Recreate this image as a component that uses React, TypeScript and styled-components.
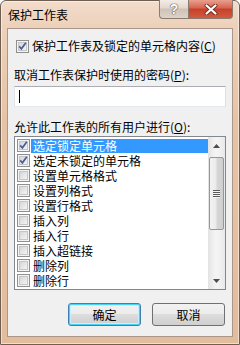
import React, { useState } from 'react';
import styled, { createGlobalStyle, css } from 'styled-components';

const GlobalStyle = createGlobalStyle`
  html, body {
    margin: 0;
    padding: 0;
    background: #ffffff;
  }
  body {
    font-family: "Noto Sans CJK SC", "Noto Sans", sans-serif;
    font-size: 12px;
    color: #000;
  }
`;

interface Permission {
  label: string;
  checked: boolean;
}

const initialItems: Permission[] = [
  { label: '选定锁定单元格', checked: true },
  { label: '选定未锁定的单元格', checked: true },
  { label: '设置单元格格式', checked: false },
  { label: '设置列格式', checked: false },
  { label: '设置行格式', checked: false },
  { label: '插入列', checked: false },
  { label: '插入行', checked: false },
  { label: '插入超链接', checked: false },
  { label: '删除列', checked: false },
  { label: '删除行', checked: false },
];

const Box = ({ checked }: { checked: boolean }) => (
  <svg width='13' height='13' viewBox='0 0 13 13'>
    <defs>
      <linearGradient id='boxFill' x1='0' y1='0' x2='1' y2='1'>
        <stop offset='0' stopColor='#d2d4d6' />
        <stop offset='1' stopColor='#f6f6f6' />
      </linearGradient>
    </defs>
    <rect x='0.5' y='0.5' width='12' height='12' fill='#f4f4f4' stroke='#8f8f8f' />
    <rect x='2.5' y='2.5' width='8' height='8' fill='url(#boxFill)' stroke='#c4c6c8' />
    {checked && (
      <path
        d='M3.2 6.4 L5.4 8.8 L9.8 2.8'
        fill='none'
        stroke='#4a5f97'
        strokeWidth='1.7'
      />
    )}
  </svg>
);

const Arrow = ({ up }: { up: boolean }) => (
  <svg width='7' height='4' viewBox='0 0 7 4'>
    <path d={up ? 'M0 4 L3.5 0 L7 4 Z' : 'M0 0 L3.5 4 L7 0 Z'} fill='#4d4d4d' />
  </svg>
);

const App = () => {
  const [protect, setProtect] = useState(true);
  const [items, setItems] = useState<Permission[]>(initialItems);
  const [selected, setSelected] = useState(0);

  const toggleItem = (index: number) => {
    const next = items.map((item, i) =>
      i === index ? { ...item, checked: !item.checked } : item
    );
    setItems(next);
  };

  return (
    <>
      <GlobalStyle />
      <Window>
        <TitleBar>
          <Title>保护工作表</Title>
          <Controls>
            <HelpButton>?</HelpButton>
            <CloseButton>
              <svg width='14' height='11' viewBox='0 0 14 11'>
                <path
                  d='M2.5 1.5 L11.5 9.5 M11.5 1.5 L2.5 9.5'
                  stroke='#7a2a1e'
                  strokeWidth='4'
                  strokeLinecap='round'
                />
                <path
                  d='M2.5 1.5 L11.5 9.5 M11.5 1.5 L2.5 9.5'
                  stroke='#ffffff'
                  strokeWidth='2.2'
                  strokeLinecap='round'
                />
              </svg>
            </CloseButton>
          </Controls>
        </TitleBar>
        <Client>
          <CheckRow onClick={() => setProtect(!protect)}>
            <Box checked={protect} />
            <span>
              保护工作表及锁定的单元格内容(<U>C</U>)
            </span>
          </CheckRow>
          <Label $top={13}>
            取消工作表保护时使用的密码(<U>P</U>):
          </Label>
          <Input>
            <Caret />
          </Input>
          <Label $top={12}>
            允许此工作表的所有用户进行(<U>O</U>):
          </Label>
          <ListBox>
            <Rows>
              {items.map((item, i) => (
                <Row key={item.label} onClick={() => setSelected(i)}>
                  <ItemBox onClick={() => toggleItem(i)}>
                    <Box checked={item.checked} />
                  </ItemBox>
                  <ItemText $selected={i === selected}>{item.label}</ItemText>
                </Row>
              ))}
            </Rows>
            <ScrollBar>
              <ScrollButton>
                <Arrow up />
              </ScrollButton>
              <Track>
                <Thumb>
                  <Grip />
                  <Grip />
                  <Grip />
                  <Grip />
                </Thumb>
              </Track>
              <ScrollButton>
                <Arrow up={false} />
              </ScrollButton>
            </ScrollBar>
          </ListBox>
          <Buttons>
            <Button $default>确定</Button>
            <Button>取消</Button>
          </Buttons>
        </Client>
      </Window>
    </>
  );
};

const Window = styled.div`
  width: 240px;
  height: 345px;
  box-sizing: border-box;
  display: flex;
  flex-direction: column;
  border: 1px solid #6f5f52;
  border-radius: 6px 6px 0 0;
  background: linear-gradient(
    to bottom,
    #f2dccb 0px,
    #edd1ba 26px,
    #e7c3a5 120px,
    #e3bc9c 345px
  );
  box-shadow: inset 0 0 0 1px rgba(255, 255, 255, 0.5);
`;

const TitleBar = styled.div`
  height: 27px;
  display: flex;
  align-items: flex-start;
  justify-content: space-between;
  padding: 0 6px 0 7px;
`;

const Title = styled.div`
  font-size: 12px;
  line-height: 16px;
  margin-top: 6px;
  color: #000;
`;

const Controls = styled.div`
  display: flex;
  margin-top: -1px;
`;

const ctrlBase = css`
  height: 19px;
  box-sizing: border-box;
  display: flex;
  align-items: center;
  justify-content: center;
  border: 1px solid #8a7b6e;
  border-top: none;
`;

const HelpButton = styled.div`
  ${ctrlBase};
  width: 29px;
  border-radius: 0 0 0 4px;
  border-right: none;
  background: linear-gradient(to bottom, #f3ece6 0%, #e2d7ce 45%, #cfc2b7 50%, #ddd3ca 100%);
  color: #ffffff;
  font-family: "Liberation Sans", sans-serif;
  font-weight: bold;
  font-size: 14px;
  text-shadow: 0 0 1px #5a5048, 0 0 1px #5a5048, 0 0 1px #5a5048;
`;

const CloseButton = styled.div`
  ${ctrlBase};
  width: 45px;
  border-radius: 0 0 4px 0;
  background: linear-gradient(to bottom, #e8a08e 0%, #d7634d 45%, #c5412a 50%, #d25a3f 100%);
`;

const Client = styled.div`
  flex: 1;
  margin: 0 6px 7px 6px;
  box-sizing: border-box;
  border: 1px solid #a8978a;
  background: #f0f0f0;
  padding: 0 6px;
  display: flex;
  flex-direction: column;
`;

const CheckRow = styled.div`
  display: flex;
  align-items: center;
  gap: 3px;
  height: 16px;
  margin-top: 9px;
  padding-left: 2px;
  line-height: 16px;
  cursor: default;
`;

const U = styled.span`
  text-decoration: underline;
  text-underline-offset: 1px;
`;

const Label = styled.div<{ $top: number }>`
  margin-top: ${props => props.$top}px;
  height: 16px;
  line-height: 16px;
`;

const Input = styled.div`
  margin-top: 3px;
  height: 21px;
  box-sizing: border-box;
  background: #ffffff;
  border: 1px solid #abadb3;
  border-left-color: #e2e3ea;
  border-right-color: #dbdfe6;
  border-bottom-color: #e3e9ef;
  display: flex;
  align-items: center;
  padding-left: 4px;
`;

const Caret = styled.div`
  width: 1px;
  height: 13px;
  background: #000;
`;

const ListBox = styled.div`
  margin-top: 1px;
  height: 154px;
  box-sizing: border-box;
  border: 1px solid #828790;
  background: #ffffff;
  display: flex;
`;

const Rows = styled.div`
  flex: 1;
  padding-top: 1px;
  display: flex;
  flex-direction: column;
`;

const Row = styled.div`
  display: flex;
  align-items: center;
  height: 15px;
  cursor: default;
`;

const ItemBox = styled.div`
  display: flex;
  margin-left: 2px;
  margin-right: 1px;
`;

const ItemText = styled.div<{ $selected: boolean }>`
  flex: 1;
  height: 14px;
  line-height: 14px;
  padding-left: 2px;
  white-space: nowrap;
  background: ${props => (props.$selected ? '#3399ff' : 'transparent')};
  color: ${props => (props.$selected ? '#ffffff' : '#000000')};
`;

const ScrollBar = styled.div`
  width: 17px;
  display: flex;
  flex-direction: column;
  background: linear-gradient(to right, #e3e3e3, #f3f3f3 40%, #f3f3f3 60%, #e8e8e8);
`;

const ScrollButton = styled.div`
  height: 17px;
  display: flex;
  align-items: center;
  justify-content: center;
`;

const Track = styled.div`
  flex: 1;
  padding-top: 3px;
  display: flex;
  flex-direction: column;
  align-items: center;
`;

const Thumb = styled.div`
  width: 15px;
  height: 73px;
  box-sizing: border-box;
  border: 1px solid #979797;
  border-radius: 2px;
  background: linear-gradient(to right, #f2f2f2, #ebebeb 45%, #d6d6d6 55%, #cfcfcf);
  display: flex;
  flex-direction: column;
  align-items: center;
  justify-content: center;
  gap: 1px;
`;

const Grip = styled.div`
  width: 7px;
  height: 1px;
  background: #5a5a5a;
  box-shadow: 0 1px 0 #f6f6f6;
`;

const Buttons = styled.div`
  margin-top: 13px;
  display: flex;
  justify-content: flex-end;
  gap: 11px;
  padding-right: 1px;
`;

const Button = styled.div<{ $default?: boolean }>`
  width: 73px;
  height: 23px;
  box-sizing: border-box;
  border: 1px solid ${props => (props.$default ? '#3c7fb1' : '#707070')};
  border-radius: 3px;
  display: flex;
  align-items: center;
  justify-content: center;
  font-size: 12px;
  background: linear-gradient(
    to bottom,
    #f2f2f2 0%,
    #ebebeb 50%,
    #dddddd 50%,
    #cfcfcf 100%
  );
  ${props =>
    props.$default &&
    css`
      box-shadow: inset 0 0 0 1px #48d2f5, inset 0 0 0 2px #c9edfb;
    `}
`;

export default App;
